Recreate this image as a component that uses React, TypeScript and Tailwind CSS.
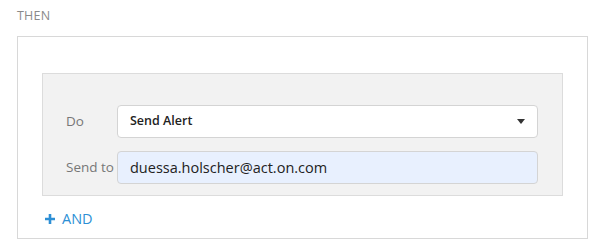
import React from "react";

const App: React.FC = () => {
  return (
    <main className="w-[603px] h-[252px] bg-white font-['Open_Sans',sans-serif] pl-[17px] pr-[15px] pt-[8px]">
      <div className="text-[12.5px] text-[#8a8a8a] leading-[16px] tracking-[0.2px]">THEN</div>

      <div className="mt-[12px] border border-[#d8d8d8] h-[203px] pt-[36px] pl-[24px] pr-[24px]">
        <div className="bg-[#f2f2f2] border border-[#dcdcdc] pt-[31px] pb-[11px] pl-[23px] pr-[24px] flex flex-col gap-[13px]">
          <div className="flex items-center">
            <span className="w-[51px] text-[13.5px] text-[#777]">Do</span>
            <div className="flex-1 h-[33px] bg-white border border-[#d4d4d4] rounded-[4px] flex items-center justify-between pl-[12px] pr-[12px]">
              <span className="text-[12.5px] font-semibold text-[#222]">Send Alert</span>
              <svg width="8" height="5" viewBox="0 0 8 5">
                <path d="M0 0 L8 0 L4 5 Z" fill="#333" />
              </svg>
            </div>
          </div>
          <div className="flex items-center">
            <span className="w-[51px] text-[13.5px] text-[#777]">Send to</span>
            <div className="flex-1 h-[33px] bg-[#e8f0fe] border border-[#d4d4d4] rounded-[4px] flex items-center pl-[12px]">
              <span className="text-[14.5px] text-[#222]">duessa.holscher@act.on.com</span>
            </div>
          </div>
        </div>

        <div className="mt-[12px] ml-[3px] flex items-center gap-[7px] text-[#2d8fd5]">
          <svg width="10" height="10" viewBox="0 0 10 10">
            <path d="M3.7 0 H6.3 V3.7 H10 V6.3 H6.3 V10 H3.7 V6.3 H0 V3.7 H3.7 Z" fill="#2d8fd5" />
          </svg>
          <span className="text-[14.5px]">AND</span>
        </div>
      </div>
    </main>
  );
};

export default App;
